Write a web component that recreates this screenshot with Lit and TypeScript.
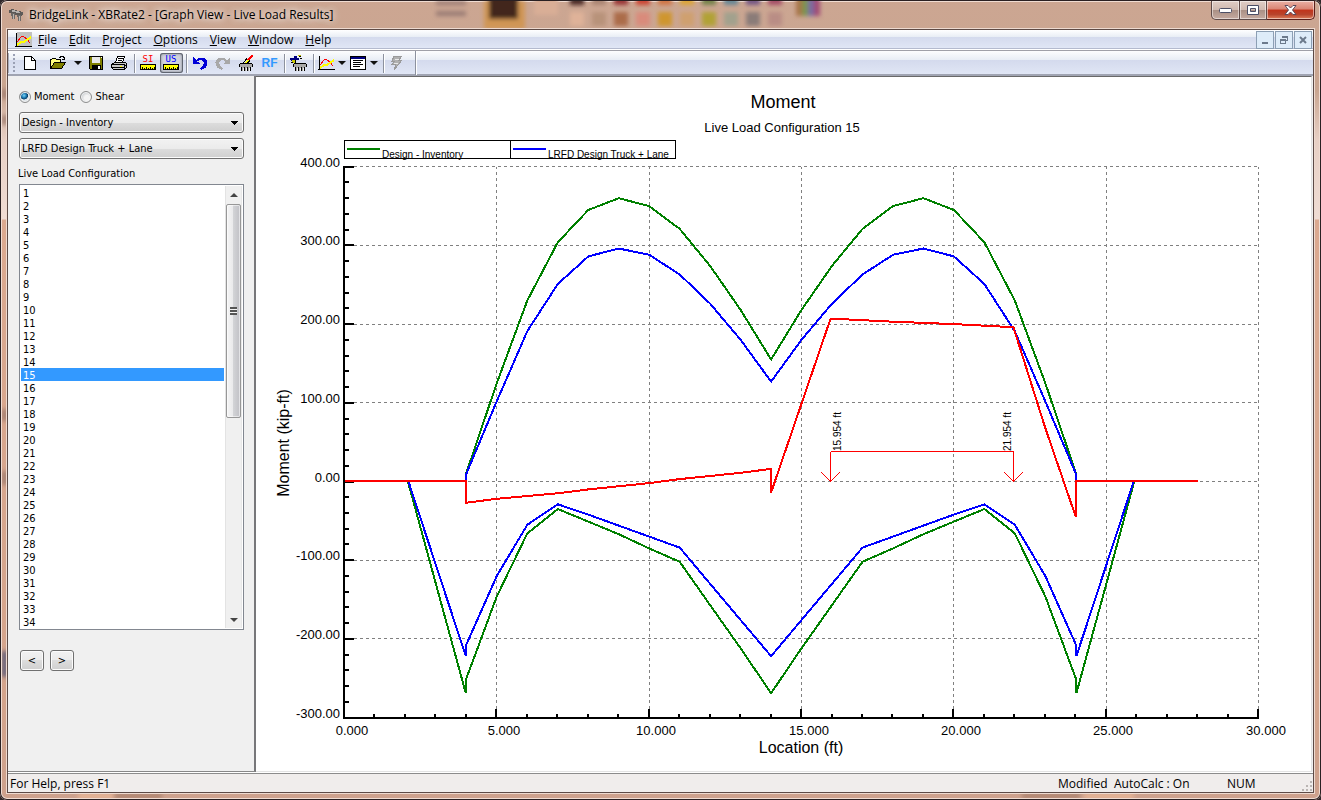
import { LitElement, html, svg, css } from "lit";
import { customElement, property, state } from "lit/decorators.js";
import { classMap } from "lit/directives/class-map.js";

type Point = [number, number];

interface Series {
  color: string;
  points: Point[];
}

const GREEN = "#008000";
const BLUE = "#0000ff";
const RED = "#ff0000";

/** Envelopes are symmetric about the middle of the cap beam. */
const mirror = (half: Point[], length: number): Point[] => [
  ...half,
  ...half
    .slice(0, -1)
    .reverse()
    .map(([x, y]): Point => [length - x, y]),
];

const SERIES: Series[] = [
  {
    color: GREEN,
    points: mirror(
      [[4, 0], [4, 11], [5, 125], [6, 230], [7, 304], [8, 345], [9, 360], [10, 350], [11, 321], [12, 274], [13, 218], [14, 155]],
      28
    ),
  },
  {
    color: GREEN,
    points: mirror(
      [[2.08, 0], [3.98, -269], [4, -250], [5, -146], [6, -66], [7, -35], [8, -51], [9, -67], [10, -85], [11, -102], [12, -157], [13, -212], [14, -269]],
      28
    ),
  },
  {
    color: BLUE,
    points: mirror(
      [[4, 0], [4, 10], [5, 102], [6, 191], [7, 251], [8, 286], [9, 296], [10, 288], [11, 263], [12, 226], [13, 180], [14, 127]],
      28
    ),
  },
  {
    color: BLUE,
    points: mirror(
      [[2.1, 0], [3.98, -222], [4, -207], [5, -120], [6, -55], [7, -29], [8, -42], [9, -56], [10, -70], [11, -84], [12, -130], [13, -176], [14, -222]],
      28
    ),
  },
  {
    color: RED,
    points: [[0, 1], [4, 1], [4, -27], [5, -22], [7, -15], [8, -10], [10, -2], [11, 3], [12, 7], [13, 11], [14, 16], [14, -14], [15.954, 207], [18, 203], [20, 200], [21.954, 196], [23, 68], [24, -45], [24, 1], [28, 1]],
  },
];

@customElement("moment-chart")
class MomentChart extends LitElement {
  @property({ type: Number }) config = 15;
  @property() quantity = "Moment";

  static styles = css`
    :host {
      display: block;
      min-width: 0;
      min-height: 0;
    }
    svg {
      display: block;
      width: 100%;
      height: 100%;
    }
    text {
      font-family: "Liberation Sans", Arial, sans-serif;
      font-size: 13px;
      fill: #000;
    }
    .title {
      font-size: 18px;
    }
    .axis {
      font-size: 16px;
    }
    .small {
      font-size: 10px;
    }
    .middle {
      text-anchor: middle;
    }
    .end {
      text-anchor: end;
    }
    .grid {
      stroke: #808080;
      stroke-dasharray: 3 3;
      shape-rendering: crispEdges;
    }
    .tick {
      stroke: #000;
      stroke-width: 2;
      shape-rendering: crispEdges;
    }
    .curve {
      fill: none;
      stroke-width: 2;
      shape-rendering: crispEdges;
    }
    .frame {
      fill: none;
      stroke: #000;
      shape-rendering: crispEdges;
    }
    .truck {
      fill: none;
      stroke: #ff0000;
      shape-rendering: crispEdges;
    }
  `;

  private px(x: number) {
    return 88.5 + x * 30.47;
  }

  private py(y: number) {
    return 404.5 - y * 0.787;
  }

  private get majorsX() {
    return [0, 5, 10, 15, 20, 25, 30];
  }

  private get majorsY() {
    return [-300, -200, -100, 0, 100, 200, 300, 400];
  }

  private axes() {
    const left = 88;
    const bottom = 641;
    const minorX = Array.from({ length: 31 }, (_, i) => i);
    const minorY = Array.from({ length: 36 }, (_, i) => -300 + i * 20);
    return svg`
      ${this.majorsY.slice(1).map((v) => {
        const y = Math.floor(this.py(v)) + 0.5;
        return svg`<line class="grid" x1="98" x2=${this.px(30)} y1=${y} y2=${y}></line>`;
      })}
      ${this.majorsX.slice(1).map((v) => {
        const x = Math.floor(this.px(v)) + 0.5;
        return svg`<line class="grid" y1="632" y2="90" x1=${x} x2=${x}></line>`;
      })}
      <line class="tick" x1=${left} x2=${left} y1="89" y2="642"></line>
      <line class="tick" x1="87" x2="1003" y1=${bottom} y2=${bottom}></line>
      ${minorY.map((v) => {
        const y = Math.round(this.py(v));
        return svg`<line class="tick" x1=${left} x2=${v % 100 === 0 ? 98 : 93} y1=${y} y2=${y}></line>`;
      })}
      ${minorX.map((v) => {
        const x = Math.round(this.px(v) - 0.5);
        return svg`<line class="tick" x1=${x} x2=${x} y1=${v % 5 === 0 ? 632 : 637} y2=${bottom}></line>`;
      })}
      ${this.majorsY.map((v) => svg`<text class="end" x="84" y=${Math.round(this.py(v))}>${v.toFixed(2)}</text>`)}
      ${this.majorsX.map((v) => svg`<text class="middle" x=${Math.round(this.px(v)) + 7} y="658">${v.toFixed(3)}</text>`)}
    `;
  }

  private axle(position: number, labelX: number) {
    const x = Math.floor(this.px(position)) + 0.5;
    return svg`
      <path class="truck" d="M${x} 374.5V404.5M${x - 9} 395.5L${x} 404.5L${x + 9} 395.5"></path>
      <text class="small" transform="translate(${labelX} 374) rotate(-90)">${position.toFixed(3)} ft</text>
    `;
  }

  render() {
    return html`
      <svg viewBox="0 0 1055 694" preserveAspectRatio="xMinYMin" role="img" aria-label="${this.quantity} envelope">
        <text class="title middle" x="527" y="31">${this.quantity}</text>
        <text class="middle" x="526" y="55">Live Load Configuration ${this.config}</text>
        <text class="axis middle" x="545" y="676">Location (ft)</text>
        <text class="axis middle" transform="translate(33 366) rotate(-90)">${this.quantity} (kip-ft)</text>
        ${this.axes()}
        <rect class="frame" x="88.5" y="63.5" width="166" height="18"></rect>
        <rect class="frame" x="254.5" y="63.5" width="165" height="18"></rect>
        <path class="curve" stroke=${GREEN} d="M91 72H124"></path>
        <path class="curve" stroke=${BLUE} d="M257 72H290"></path>
        <text class="small" x="126" y="81">Design - Inventory</text>
        <text class="small" x="292" y="81">LRFD Design Truck + Lane</text>
        ${SERIES.map(
          (s) => svg`<polyline class="curve" stroke=${s.color}
            points=${s.points.map(([x, y]) => `${this.px(x).toFixed(1)},${this.py(y).toFixed(1)}`).join(" ")}></polyline>`
        )}
        <path class="truck" d="M574.5 374.5H757.5"></path>
        ${this.axle(15.954, 585)} ${this.axle(21.954, 755)}
      </svg>
    `;
  }
}

const chartIcon = svg`
  <g fill="none" shape-rendering="crispEdges">
    <path d="M1.5 1V15M0 14.5H17" stroke="#000"></path>
    <path d="M2 10L6 5L8 4L12 7L15 11" stroke="#f00"></path>
    <path d="M2 13L6 10L9 10L16 5" stroke="#ffff00" stroke-width="2"></path>
  </g>`;

const pier = svg`
  <path d="M2 9H14V12H13V16H3V12H2z" fill="#a8a8a8"></path>
  <path d="M1.5 9V12M14.5 9V12M2 8.5H14M3.5 12V16M6.5 12V16M9.5 12V16M12.5 12V16" stroke="#000" fill="none"></path>
  <path d="M5 13V16M8 13V16M11 13V16" stroke="#f0f0f0" fill="none"></path>`;

const ruler = svg`
  <rect x="0.5" y="9.5" width="15" height="5" fill="#ffff00" stroke="#000"></rect>
  <path d="M2.5 12V14M4.5 13V14M6.5 12V14M8.5 13V14M10.5 12V14M12.5 13V14M14.5 12V14" stroke="#000"></path>`;

const ICONS: Record<string, unknown> = {
  chart: chartIcon,
  new: svg`<path d="M2.5 1.5H9.5L13.5 5.5V14.5H2.5z" fill="#fff" stroke="#000"></path>
    <path d="M9.5 1.5V5.5H13.5" fill="none" stroke="#000"></path>`,
  open: svg`<path d="M0.5 13.5V4.5H1.5L2.5 3.5H5.5L6.5 4.5H10.5V7.5" fill="#ffff80" stroke="#000"></path>
    <path d="M0.5 13.5L4.5 7.5H15.5L11.5 13.5z" fill="#808000" stroke="#000"></path>
    <path d="M9 2.5H10V1.5H13V2.5H14V4M12 4.5H15M14.5 2V5" stroke="#000" fill="none"></path>`,
  save: svg`<path d="M1.5 1.5H14.5V14.5H2.5L1.5 13.5z" fill="#808000" stroke="#000"></path>
    <path d="M4 2H12V8H4z" fill="#e8e8e8"></path><path d="M4 10H13V15H4z" fill="#000"></path>
    <path d="M10 11H12V14H10z" fill="#fff"></path><path d="M13 2H14V3H13z" fill="#fff"></path>`,
  print: svg`<path d="M4.5 7.5L6.5 1.5H13.5L11.5 7.5" fill="#fff" stroke="#000"></path>
    <path d="M7 3.5H12M6.5 5.5H11" stroke="#000"></path>
    <path d="M0.5 9.5L3.5 7.5H14.5L15.5 8.5V12.5L13.5 14.5H2.5L0.5 12.5z" fill="#c8c8c8" stroke="#000"></path>
    <path d="M1 9.5H13M1 12.5H13M13.5 9V14M14 10H15" stroke="#000"></path><path d="M9 11H11V12H9z" fill="#ff0"></path>`,
  si: svg`<text class="unit" x="8" y="7" fill="#ff0000">SI</text>${ruler}`,
  us: svg`<text class="unit" x="8" y="7" fill="#0000ff">US</text>${ruler}`,
  undo: svg`<path d="M1 2V9H8L5.5 6.5C8 4 12 5 12 8C12 10 10 12 8 13L9 15C13 14 16 11 15.5 7.5C15 2 8 1 4 5z" fill="#0000d8"></path>`,
  redo: svg`<path d="M15 2V9H8L10.5 6.5C8 4 4 5 4 8C4 10 6 12 8 13L7 15C3 14 0 11 0.5 7.5C1 2 8 1 12 5z" fill="#a8a8a8"></path>`,
  brush: svg`${pier}<path d="M14.5 0L9.5 6" stroke="#f00" stroke-width="2"></path>
    <path d="M10 4L6 8H8L11 6z" fill="#ffff00"></path><path d="M9 3.5L5 8M12 5.5L9 8.5" stroke="#000"></path>`,
  truck: svg`<g transform="translate(2 0)">${pier}</g>
    <path d="M0 3H4V1H7V3H9V5H5V6H1z" fill="#000080"></path><path d="M8 0H11V1H8zM2 5H5V8H3V7H2z" fill="#c8c800"></path>
    <path d="M9 1.5H11M10 3.5H12M5.5 5V8M1 7.5H3" stroke="#000" fill="none"></path>`,
  report: svg`<rect x="0.5" y="1.5" width="15" height="13" fill="#fff" stroke="#000"></rect><path d="M1 2H15V4H1z" fill="#000080"></path>
    <path d="M3 5.5H13M3 7.5H11M3 9.5H13M3 11.5H10" stroke="#000"></path>`,
  bolt: svg`<path d="M5 1H13L10 5H13L5 15L7 9H3L6 6H3z" fill="#b0b0b0" stroke="#9a9a9a"></path><path d="M6 4H10M5 8H9" stroke="#e8e8e8"></path>`,
};

const icon = (name: string) =>
  html`<svg class="icon" width="17" height="16" viewBox="0 0 17 16" shape-rendering="crispEdges" aria-hidden="true">${ICONS[name]}</svg>`;

@customElement("app-root")
class AppRoot extends LitElement {
  @state() private config = 15;
  @state() private quantity = "Moment";
  @state() private scroll = 0;

  private readonly count = 66;

  static styles = css`
    :host {
      display: block;
      height: 100vh;
      background: #30282a;
      color: #000;
      --ui: "Open Sans", "Noto Sans", sans-serif;
      --dialog: "DejaVu Sans Condensed", "DejaVu Sans", sans-serif;
      font: 12px/16px var(--ui);
    }
    * {
      box-sizing: border-box;
    }
    button,
    select {
      font: inherit;
      color: inherit;
      margin: 0;
    }
    .window {
      position: relative;
      height: 100%;
      display: flex;
      flex-direction: column;
      padding: 0 8px 8px;
      border-radius: 7px;
      overflow: hidden;
      background: linear-gradient(#cca692 0, #c9a590 90px, #e7cfc4 140px, #efdcd4 219px, #dba990 220px, #d4a48c 700px, #cda18d);
      box-shadow: inset 0 0 0 1px #2a2022, inset 0 0 0 2px #f0dcd2;
    }
    .glass {
      position: absolute;
      left: 2px;
      top: 1px;
      width: calc(100% - 4px);
      height: calc(100% - 3px);
    }
    .titlebar {
      position: relative;
      display: flex;
      align-items: flex-start;
      height: 29px;
      margin-right: -2px;
      padding-top: 1px;
    }
    .caption {
      display: flex;
      align-items: center;
      gap: 6px;
      height: 28px;
      margin: 0;
      padding-left: 1px;
      font: 12px/16px var(--ui);
      text-shadow: 0 0 6px #fff, 0 0 10px #fff8, 0 0 14px #fff8;
      flex: 1;
    }
    .winbtn {
      height: 19px;
      padding: 0;
      border: 1px solid #5e4a48;
      border-top: 0;
      border-left-width: 0;
      background: linear-gradient(#e0cdc5 0, #cfb9b0 48%, #a98f84 50%, #c5aaa0 100%);
      box-shadow: inset 0 0 0 1px #ffffff80;
      display: grid;
      place-items: center;
      width: 27px;
    }
    .winbtn.first {
      width: 29px;
      border-left-width: 1px;
      border-bottom-left-radius: 5px;
    }
    .winbtn.close {
      width: 48px;
      background: linear-gradient(#eab1a5 0, #d98473 45%, #c1341b 50%, #b8442c 75%, #dd7f5c 100%);
      border-color: #5a1f1a;
      border-bottom-right-radius: 5px;
    }
    .client {
      position: relative;
      flex: 1;
      min-height: 0;
      display: flex;
      flex-direction: column;
      background: #f0f0f0;
      box-shadow: 0 0 0 1px #5c4a46, 0 0 0 2px #eedad0;
      margin-top: 1px;
    }
    .menubar {
      display: flex;
      align-items: center;
      height: 20px;
      padding: 0 1px 0 7px;
      background: linear-gradient(#fff 0, #e8edf5 7px, #d4daed 7px, #e0e6f5 18px, #b4bace 18px, #b4bace 19px, #fff 19px);
    }
    .menubar nav {
      display: flex;
      flex: 1;
    }
    .menu {
      border: 0;
      background: none;
      padding: 0 6px;
      line-height: 18px;
    }
    .mdi {
      width: 18px;
      height: 18px;
      margin-left: 1px;
      padding: 0;
      border: 1px solid #8c9fb4;
      background: #deecf9;
      display: grid;
      place-items: center;
    }
    .toolbar {
      display: flex;
      align-items: center;
      height: 26px;
      box-shadow: inset 0 1px #a0a0a8;
      background: linear-gradient(#fff 0, #e8edf5 10px, #d4daed 10px, #e0e6f5 24px, #a0a4b2 24px);
    }
    .grip {
      width: 11px;
      height: 20px;
      background: radial-gradient(circle, #9aa0b4 1px, transparent 1px) 2px 0 / 6px 4px repeat-y;
      border-left: 1px solid #a8acba;
    }
    .tool {
      width: 23px;
      height: 20px;
      padding: 0;
      border: 0;
      background: none;
      display: flex;
      align-items: center;
      justify-content: center;
      flex: none;
    }
    .tool.pressed {
      background: #d0d3dd;
      border-radius: 3px;
      box-shadow: inset 0 0 0 1px #5f6470, inset 0 0 2px 2px #a8abb6;
    }
    .tool.drop {
      width: 32px;
      gap: 3px;
    }
    .tool.split {
      width: 43px;
      gap: 7px;
      padding-left: 4px;
    }
    .tool.drop::after,
    .tool.split::after {
      content: "";
      border: 4px solid transparent;
      border-top-color: #111;
      border-bottom: 0;
    }
    .tool.rf {
      color: #3399ff;
      font: bold 12px/16px "Liberation Sans", sans-serif;
    }
    .unit {
      font: 9px "DejaVu Sans Mono", monospace;
      text-anchor: middle;
    }
    .sep {
      width: 6px;
      height: 19px;
      background: linear-gradient(90deg, transparent 3px, #8c919e 3px, #8c919e 4px, #fff 4px, #fff 5px, transparent 5px);
    }
    .sep.last {
      margin-left: 3px;
      height: 24px;
    }
    .work {
      flex: 1;
      min-height: 0;
      display: flex;
      padding-right: 1px;
    }
    .panel {
      width: 248px;
      flex: none;
      padding: 14px 10px 0 11px;
      border-right: 2px solid #77777a;
      border-bottom: 1px solid #888;
      font: 11px/13px var(--dialog);
      display: flex;
      flex-direction: column;
    }
    .radios {
      display: flex;
      gap: 6px;
      border: 0;
      margin: 0 0 9px;
      padding: 0;
    }
    .radios label {
      display: flex;
      align-items: center;
      gap: 3px;
    }
    .radios input {
      appearance: none;
      width: 12px;
      height: 12px;
      margin: 0;
      border: 1px solid #8e8f8f;
      border-radius: 50%;
      background: radial-gradient(circle at 60% 60%, #f4f4f4 30%, #c4c8cc 75%);
      box-shadow: inset 0 0 0 1px #f4f4f4;
    }
    .radios input:checked {
      background: radial-gradient(circle at 40% 35%, #7fd6f5 0, #1f7fb8 25%, #0b3e66 42%, #dfe6ea 48%);
    }
    .combo {
      appearance: none;
      height: 21px;
      margin: 0 0 5px;
      padding: 0 20px 0 2px;
      border: 1px solid #707070;
      border-radius: 3px;
      box-shadow: inset 0 0 0 1px #fcfcfc;
      background: linear-gradient(to bottom right, #000 50%, transparent 50%) right 4px center / 4px 4px no-repeat,
        linear-gradient(to bottom left, #000 50%, transparent 50%) right 8px center / 4px 4px no-repeat,
        linear-gradient(#f2f2f2 0, #ebebeb 50%, #dddddd 50%, #cfcfcf 100%);
    }
    .label {
      margin: 3px 0 4px -1px;
    }
    .listbox {
      display: flex;
      height: 446px;
      border: 1px solid #828790;
      background: #fff;
      padding: 1px;
    }
    .list {
      flex: 1;
      min-width: 0;
      height: 442px;
      padding: 0;
      border: 0;
      outline: 0;
      background: #fff;
      scrollbar-width: none;
    }
    .list::-webkit-scrollbar {
      display: none;
    }
    .list option {
      height: 13px;
      min-height: 13px;
      line-height: 12px;
      padding: 1px 2px 0;
    }
    .list option:checked {
      background: #3399ff linear-gradient(#3399ff, #3399ff);
      color: #fff;
    }
    .scrollbar {
      width: 17px;
      margin-left: 1px;
      display: flex;
      flex-direction: column;
      background: #f0f0f0;
      box-shadow: inset 1px 0 #e3e3e3, inset -1px 0 #e8e8e8;
    }
    .arrow {
      height: 17px;
      padding: 0;
      border: 0;
      background: none;
      display: grid;
      place-items: center;
    }
    .arrow::before {
      content: "";
      border: 4px solid transparent;
      border-bottom-color: #444;
      border-top: 0;
    }
    .arrow.down::before {
      border: 4px solid transparent;
      border-top-color: #444;
      border-bottom: 0;
    }
    .track {
      flex: 1;
      min-height: 0;
    }
    .thumb {
      height: 52.5%;
      border: 1px solid #979797;
      border-radius: 2px;
      margin: 1px 1px 0;
      display: grid;
      place-items: center;
      background: linear-gradient(90deg, #f5f5f5 0, #e9e9eb 48%, #d2d3d6 50%, #c4c4c9 90%);
      box-shadow: inset 0 0 0 1px #fff8;
    }
    .thumb::before {
      content: "";
      width: 7px;
      height: 8px;
      background: repeating-linear-gradient(#555 0, #555 2px, #f4f4f4 2px, #f4f4f4 3px);
    }
    .steps {
      display: flex;
      gap: 6px;
      padding: 20px 1px 0;
    }
    .step {
      width: 24px;
      height: 21px;
      padding: 0;
      border: 1px solid #707070;
      border-radius: 3px;
      background: linear-gradient(#f2f2f2 0, #ebebeb 50%, #dddddd 50%, #cfcfcf 100%);
      box-shadow: inset 0 0 0 1px #fcfcfc;
    }
    .view {
      flex: 1;
      min-width: 0;
      background: #fff;
      border-top: 1px solid #696969;
      border-right: 1px solid #e3e3e3;
      border-bottom: 1px solid #e3e3e3;
      display: flex;
    }
    moment-chart {
      flex: 1;
    }
    .status {
      display: flex;
      align-items: center;
      height: 20px;
      padding: 2px 0 0 2px;
      border-top: 1px solid #fff;
      box-shadow: inset 0 1px #8c8c8c;
      background: #f0edec;
    }
    .status .hint {
      flex: 1;
    }
    .status .modified {
      width: 56px;
    }
    .status .calc {
      width: 113px;
    }
    .status .num {
      width: 74px;
    }
    .status .size {
      align-self: flex-end;
      display: block;
    }
  `;

  private glass() {
    const top = ["#4a2c28", "#a98472", "#983434", "#cc4432", "#d07444", "#dca436", "#748248", "#668694", "#745684", "#a44e66"];
    const low = ["#dfb299", "#b8937a", "#ab6c48", "#d98b7c", "#cf962f", "#cfa070", "#b1a236", "#a2a18d", "#8a7b78", "#b98d85"];
    return html`<svg class="glass" aria-hidden="true">
      <defs>
        <filter id="soft" x="-20%" y="-20%" width="140%" height="140%"><feGaussianBlur stdDeviation="2"></feGaussianBlur></filter>
      </defs>
      <g filter="url(#soft)">
        <path d="M434 0H464V4H434zM434 10H464V15H434z" fill="#9a7c74"></path>
        <rect x="482" y="0" width="41" height="28" fill="#d09654"></rect>
        <rect x="487" y="-6" width="29" height="24" fill="#43281e"></rect>
        <rect x="532" y="-6" width="24" height="20" fill="#d9ae96"></rect>
        ${top.map((c, i) => svg`<rect x=${568 + i * 22} y="-6" width="14" height="10" fill=${c}></rect>`)}
        ${low.map((c, i) => svg`<rect x=${568 + i * 22} y="11" width="14" height="14" fill=${c}></rect>`)}
        <path d="M794 -4H800V15H794z" fill="#a8744a"></path>
        <path d="M800 -4H806V15H800z" fill="#7c9450"></path>
        <path d="M806 -4H812V15H806z" fill="#7c6aa0"></path>
        <path d="M812 -4H818V15H812z" fill="#a04c74"></path>
        <path d="M0 88H5V98H0zM0 114H5V124H0zM0 408H5V420H0zM0 470H5V484H0z" fill="#a07e70"></path>
        <path d="M0 650H5V676H0z" fill="#5c5c78"></path>
        <path d="M112 792H160V798H112zM1020 792H1078V798H1020z" fill="#b08672"></path>
        <path d="M76 792H112V798H76zM1082 792H1132V798H1082z" fill="#e6b496"></path>
      </g>
    </svg>`;
  }

  private tool(name: string, label: string, extra = "") {
    return html`<button class="tool ${extra}" title=${label} aria-label=${label}>${icon(name)}</button>`;
  }

  private sep() {
    return html`<span class="sep"></span>`;
  }

  private get list() {
    return this.renderRoot.querySelector(".list") as HTMLSelectElement;
  }

  private onScroll(e: Event) {
    const el = e.target as HTMLElement;
    this.scroll = el.scrollTop / Math.max(1, el.scrollHeight - el.clientHeight);
  }

  private step(delta: number) {
    this.config = Math.min(this.count, Math.max(1, this.config + delta));
  }

  render() {
    const configs = Array.from({ length: this.count }, (_, i) => i + 1);
    const menus = ["File", "Edit", "Project", "Options", "View", "Window", "Help"];
    return html`
      <div class="window">
        ${this.glass()}
        <header class="titlebar">
          <h1 class="caption">
            <svg width="14" height="14" viewBox="0 0 14 14" shape-rendering="crispEdges" aria-hidden="true">
              <path d="M0 2L3 1L14 4V7L12 8H9L0 5z" fill="#5c5856"></path>
              <path d="M1 3L4 2L12 4L9 5z" fill="#b4b0ae"></path>
              <path d="M2 5H6V11H3V8H2zM8 7H12V13H9V9H8z" fill="#6c6866"></path>
              <path d="M4.5 6V11M10.5 8V13" stroke="#b8b4b2"></path>
            </svg>
            BridgeLink - XBRate2 - [Graph View - Live Load Results]
          </h1>
          <button class="winbtn first" aria-label="Minimize">
            <svg width="13" height="5"><rect x="0.5" y="0.5" width="12" height="4" rx="1" fill="#fff" stroke="#4c4f66"></rect></svg>
          </button>
          <button class="winbtn" aria-label="Maximize">
            <svg width="12" height="10"><path d="M0.5 0.5H11.5V9.5H0.5zM3.5 3.5V6.5H8.5V3.5z" fill="#fff" fill-rule="evenodd" stroke="#4c4f66"></path></svg>
          </button>
          <button class="winbtn close" aria-label="Close">
            <svg width="13" height="10"><path d="M1 0.5H4L6.5 3L9 0.5H12L8.5 5L12 9.5H9L6.5 7L4 9.5H1L4.5 5z" fill="#fff" stroke="#5a4a5c"></path></svg>
          </button>
        </header>
        <div class="client">
          <div class="menubar">
            <svg width="17" height="16" viewBox="0 0 17 16" shape-rendering="crispEdges" aria-hidden="true"><rect x="2" width="15" height="14" fill="#c0c0c0"></rect>${chartIcon}</svg>
            <nav>${menus.map((m) => html`<button class="menu"><u>${m[0]}</u>${m.slice(1)}</button>`)}</nav>
            <button class="mdi" aria-label="Minimize document">
              <svg width="10" height="10"><path d="M2 7H8V9H2z" fill="#6c7a8c"></path></svg>
            </button>
            <button class="mdi" aria-label="Restore document">
              <svg width="10" height="10" shape-rendering="crispEdges"><path d="M3.5 3V1.5H8.500V5.500H7M3 2H9M1.500 4V8.500H6.500V4.500H1M1 5H7" stroke="#6c7a8c" fill="none"></path></svg>
            </button>
            <button class="mdi" aria-label="Close document">
              <svg width="10" height="10"><path d="M2 2L8 8M8 2L2 8" stroke="#6c7a8c" stroke-width="2"></path></svg>
            </button>
          </div>
          <div class="toolbar" role="toolbar" aria-label="Standard">
            <span class="grip"></span>
            ${this.tool("new", "New")} ${this.tool("open", "Open", "split")} ${this.tool("save", "Save")} ${this.tool("print", "Print")}
            ${this.sep()} ${this.tool("si", "SI units")} ${this.tool("us", "US units", "pressed")} ${this.sep()}
            ${this.tool("undo", "Undo")} ${this.tool("redo", "Redo")} ${this.tool("brush", "Edit pier")}
            <button class="tool rf">RF</button>
            ${this.sep()} ${this.tool("truck", "Live load")} ${this.sep()} ${this.tool("chart", "Graphs", "drop")}
            ${this.tool("report", "Reports", "drop")} ${this.sep()} ${this.tool("bolt", "Update")}
            <span class="sep last"></span>
          </div>
          <main class="work">
            <aside class="panel">
              <fieldset class="radios" aria-label="Result">
                ${["Moment", "Shear"].map(
                  (q) => html`<label class=${classMap({ on: q === this.quantity })}
                    ><input type="radio" name="result" .checked=${q === this.quantity} @change=${() => (this.quantity = q)} />${q}</label
                  >`
                )}
              </fieldset>
              <select class="combo" aria-label="Rating type">
                <option>Design - Inventory</option>
              </select>
              <select class="combo" aria-label="Live load">
                <option>LRFD Design Truck + Lane</option>
              </select>
              <label class="label" for="configs">Live Load Configuration</label>
              <div class="listbox">
                <select
                  class="list"
                  id="configs"
                  size="34"
                  @scroll=${this.onScroll}
                  @change=${(e: Event) => (this.config = Number((e.target as HTMLSelectElement).value))}
                >
                  ${configs.map((n) => html`<option value=${n} .selected=${n === this.config}>${n}</option>`)}
                </select>
                <div class="scrollbar">
                  <button class="arrow" aria-label="Scroll up" @click=${() => this.list.scrollBy(0, -13)}></button>
                  <div class="track">
                    <div class="thumb" style="transform: translateY(${this.scroll * 90}%)"></div>
                  </div>
                  <button class="arrow down" aria-label="Scroll down" @click=${() => this.list.scrollBy(0, 13)}></button>
                </div>
              </div>
              <div class="steps">
                <button class="step" aria-label="Previous configuration" @click=${() => this.step(-1)}>&lt;</button>
                <button class="step" aria-label="Next configuration" @click=${() => this.step(1)}>&gt;</button>
              </div>
            </aside>
            <section class="view"><moment-chart .config=${this.config} .quantity=${this.quantity}></moment-chart></section>
          </main>
          <footer class="status">
            <span class="hint">For Help, press F1</span>
            <span class="modified">Modified</span>
            <span class="calc">AutoCalc : On</span>
            <span class="num">NUM</span>
            <svg class="size" width="12" height="12" aria-hidden="true">
              <path d="M9 1H11V3H9zM9 5H11V7H9zM5 5H7V7H5zM9 9H11V11H9zM5 9H7V11H5zM1 9H3V11H1z" fill="#bab5b3"></path>
            </svg>
          </footer>
        </div>
      </div>
    `;
  }
}
